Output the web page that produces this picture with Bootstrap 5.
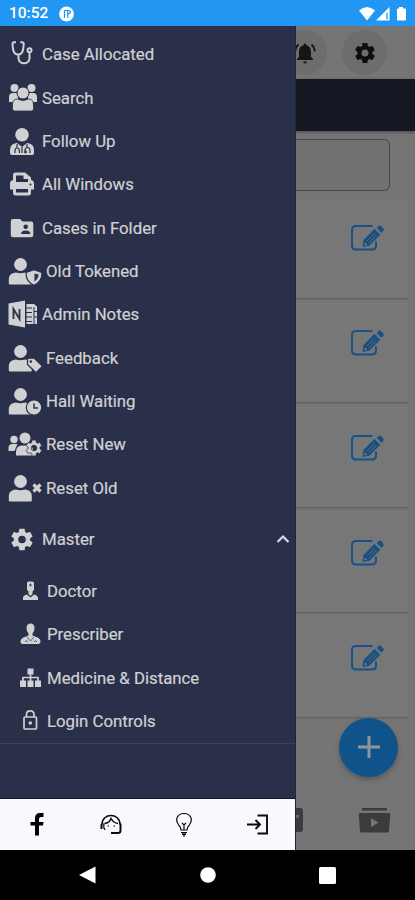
<!DOCTYPE html>
<html lang="en">
<head>
<meta charset="utf-8">
<meta name="viewport" content="width=device-width, initial-scale=1">
<title>Case Management</title>
<link href="https://cdn.jsdelivr.net/npm/bootstrap@5.3.0/dist/css/bootstrap.min.css" rel="stylesheet">
<style>
  body { font-family: Roboto, "Liberation Sans", sans-serif; background: #000; }
  svg { display: block; flex: none; }
  .phone { width: 415px; height: 900px; }
  .statusbar { height: 26px; background: #2196f3; font-size: 15.5px; font-weight: 500; padding: 2px 8px 0 9px; gap: 11px; }
  .drawer { width: 296px; background: #2a3049; color: #d0d1d4; border-right: 1px solid #20253b; }
  .menu { padding-top: 6.5px; }
  .entry, .sub { height: 43.35px; font-size: 16.8px; line-height: 20px; white-space: nowrap; -webkit-text-stroke: .2px #d0d1d4; }
  .entry { padding-left: 7px; }
  .entry.wide svg { margin-right: 4px; }
  .entry svg, .sub svg { fill: #d0d1d3; color: #d0d1d3; -webkit-text-stroke: 0; }
  .entry.master { height: 60px; }
  .entry.master .chev { margin-right: 4px; fill: none; }
  .sub { padding-left: 19px; }
  .subs { border-bottom: 1px solid #3a435a; height: 174.5px; }
  .quick { height: 52px; background: #f8f9fd; border-top: 1px solid #14172a; color: #0b0b0d; }
  .page { min-width: 0; background: #757575; color: #111; }
  .tools { height: 53px; padding-right: 28px; gap: 15px; }
  .round { width: 45px; height: 45px; background: #6d6d6d; }
  .band { height: 52px; background: #151723; box-shadow: 0 1px 3px #444; }
  .find { height: 52px; width: 94px; margin-top: 8px; border: 1px solid #464646; border-left: 0; border-radius: 0 6px 6px 0; background: #727272; }
  .cases { margin: 7px 7px 0 0; background: #777; }
  .case { height: 104.75px; border-bottom: 1px solid #626262; padding-right: 24px; padding-bottom: 14px; box-shadow: 0 1px 1px #6e6e6e; }
  .case:first-child { height: 100.5px; padding-bottom: 19px; }
  .fab { width: 59px; height: 59px; background: #10528a; margin-right: 17px; box-shadow: 0 3px 5px #5a5a5a; }
  .tabs { height: 60px; padding-right: 24px; }
  .sysnav { height: 50px; background: #000; padding: 0 79px; }
</style>
<script src="https://cdn.jsdelivr.net/npm/bootstrap@5.3.0/dist/js/bootstrap.bundle.min.js"></script>
</head>
<body class="m-0 overflow-hidden">
<svg width="0" height="0" class="position-absolute">
  <defs>
    <symbol id="person" viewBox="0 0 35 30"><circle cx="13.500" cy="8.500" r="6.400"/><path d="M1.800 27.500v-4q0-6.500 7-7 4.500 1.300 9.500 0 6.500.5 6.500 7v4q0 1-1 1h-21q-1 0-1-1z"/></symbol>
    <symbol id="gear" viewBox="0 0 24 24"><path d="M19.430 12.980c.04-.32.07-.64.07-.98s-.03-.66-.07-.98l2.110-1.650c.19-.15.24-.42.12-.64l-2-3.460c-.12-.22-.39-.3-.61-.22l-2.490 1c-.52-.4-1.080-.73-1.690-.98l-.38-2.650A.49.49 0 0 0 14 2h-4c-.25 0-.46.18-.49.42l-.38 2.650c-.61.25-1.170.59-1.690.98l-2.490-1c-.23-.09-.49 0-.61.22l-2 3.460c-.13.22-.07.49.12.64l2.110 1.650c-.04.32-.07.65-.07.98s.03.66.07.98l-2.110 1.650c-.19.15-.24.42-.12.64l2 3.460c.12.22.39.3.61.22l2.490-1c.52.4 1.080.73 1.690.98l.38 2.650c.03.24.24.42.49.42h4c.25 0 .46-.18.49-.42l.38-2.650c.61-.25 1.170-.59 1.690-.98l2.490 1c.23.09.49 0 .61-.22l2-3.460c.12-.22.07-.49-.12-.64zM12 15.500a3.500 3.500 0 1 1 0-7 3.500 3.500 0 0 1 0 7z"/></symbol>
    <symbol id="edit" viewBox="0 0 34 28"><path d="M22.500 2H6Q2 2 2 6v15.500q0 4 4 4h16q4 0 4-4v-4" fill="none" stroke="#16518a" stroke-width="2"/><path d="M14 16.500 24.500 6l4.800 4.800L19 21l-5.500 1z" fill="#1d4a73" stroke="#14568f" stroke-width="1.600"/><path d="m17 17 8-8m-6.500 10 8-8" stroke="#5d6f80" stroke-width="1"/><path d="m26.700 4 2-2q1.200-.9 2.300 0l2.300 2.500q.9 1.200 0 2.200l-1.800 2z" fill="#174f83"/><path d="m14.800 18.200 2.600 2.400-3 .6z" fill="#747b82"/></symbol>
  </defs>
</svg>
<div class="phone d-flex flex-column">
  <header class="statusbar d-flex align-items-center text-white">
    <span>10:52</span>
    <svg width="15" height="16" viewBox="0 0 15 16"><circle cx="7.500" cy="8" r="7.400" fill="#fff"/><path d="M5.500 4v8M8.700 4v8M5 4.500h4.500q2.200.3 2 1.900-.3 1.400-2.300 1.400" stroke="#2196f3" stroke-width="1.200" fill="none"/></svg>
    <svg class="ms-auto" width="48" height="16" viewBox="0 0 48 16" fill="#fff"><path d="M0 4.500Q8-2.500 16 4.500L8 14.500z"/><path d="M30.500 1v13.500H17z"/><path d="M28 6.500v7" stroke="#2196f3" stroke-width="1.300"/><path d="M40 1h4v1.500h2q1 0 1 1v10q0 1-1 1h-7q-1 0-1-1v-10q0-1 1-1h1z"/></svg>
  </header>

  <div class="d-flex flex-grow-1">
    <aside class="drawer d-flex flex-column flex-shrink-0">
      <nav class="menu flex-grow-1">
        <div class="entry d-flex align-items-center"><svg width="35" height="30"><g fill="none" stroke="currentColor" stroke-width="2"><path d="M9 3.300H7Q5.300 3.300 5.500 5.500l.6 5q.9 5 5 5t5-5l.6-5q.2-2.200-1.500-2.200h-2M11.500 15.500V19c0 7 11 7 11 0v-5.500"/><circle cx="22.500" cy="11.300" r="2"/></g></svg><span>Case Allocated</span></div>
        <div class="entry d-flex align-items-center"><svg width="35" height="30"><circle cx="7.500" cy="5" r="4"/><circle cx="24.500" cy="5" r="4"/><path d="M2 19v-5q0-4 4-4h5v9zM30 19v-5q0-4-4-4h-5v9z"/><circle cx="16" cy="10" r="6" stroke="#2a3049"/><path d="M5.500 26v-4q0-6 5-6 5.500 3 11 0 5 0 5 6v4q0 2-2 2h-17q-2 0-2-2z" stroke="#2a3049" stroke-width=".8"/></svg><span>Search</span></div>
        <div class="entry d-flex align-items-center"><svg width="35" height="30"><circle cx="15" cy="8.800" r="6.800"/><path d="M3 27v-3q0-6.500 7-7l5 4 5-4q7 .5 7 7v3q0 2-2 2H5q-2 0-2-2z"/><g fill="none" stroke="#2a3049" stroke-width="1.200"><path d="M10 18v4M20 18v3M8 27v-2q0-3 2.200-3t2.200 3v2M15 21v6M18 25q0-3.500 2.500-3.500T23 25v2"/><circle cx="18.500" cy="26" r=".8"/></g></svg><span>Follow Up</span></div>
        <div class="entry d-flex align-items-center"><svg width="35" height="30"><path fill-rule="evenodd" d="M6 11V6q0-2.500 2.500-2.500h9.500l6 5v2.500q3 .5 3 3.500v6h-3v3q0 3-2.500 3h-13q-2.500 0-2.500-3v-3H3v-6q0-3 3-3.500zm3-4.500v6.500h12V10h-4.500V6.500zM9 20v3.500h12V20z"/><circle cx="23.500" cy="15.500" r="1" fill="#2a3049"/></svg><span>All Windows</span></div>
        <div class="entry d-flex align-items-center"><svg width="35" height="30"><path d="M6 6h7l2.500 2.500H24q2.300 0 2.300 2.300V22q0 2.300-2.300 2.300H6q-2.200 0-2.200-2.300V8.200Q3.800 6 6 6z"/><g fill="#2a3049"><circle cx="18.700" cy="13.700" r="2.300"/><path d="M14 21q0-3.500 4.700-3.500t4.700 3.500z"/></g></svg><span>Cases in Folder</span></div>
        <div class="entry wide d-flex align-items-center"><svg width="35" height="30"><use href="#person"/><path d="m27 13.800 7.800 2.700q1 8.500-7.800 12.800-8.800-4.300-7.800-12.800z" stroke="#2a3049" stroke-width="1.200"/><path d="M27.500 17.500v8q4-3 4-7z" fill="#2a3049"/></svg><span>Old Tokened</span></div>
        <div class="entry d-flex align-items-center"><svg width="35" height="30"><path d="M1.500 4.500 18 1.500v27l-16.500-3z"/><path d="M19.500 5H27l3 2.500V25H19.500z"/><path d="M19 9h6m-6 4.500h6M19 18h6m-6 4.500h6M27 8v17m0-12.500h3M27 18h3" stroke="#2a3049" stroke-width="1"/><path d="M6.500 20V10l6 10V10" fill="none" stroke="#2a3049" stroke-width="1.800"/></svg><span>Admin Notes</span></div>
        <div class="entry wide d-flex align-items-center"><svg width="35" height="30"><use href="#person"/><path d="M20.500 16.500q0-1.300 1.300-1.300h5.500l7.200 7q1 1 0 2l-4.500 4.500q-1 .9-2 0l-7.500-7.300z" stroke="#2a3049" stroke-width="1.200"/><circle cx="23.800" cy="18.600" r="1.300" fill="#2a3049"/></svg><span>Feedback</span></div>
        <div class="entry wide d-flex align-items-center"><svg width="35" height="30"><use href="#person"/><circle cx="27" cy="21.500" r="7.700" stroke="#2a3049" stroke-width="1.200"/><path d="M27 17.500v4.500h4" fill="none" stroke="#2a3049" stroke-width="1.500"/></svg><span>Hall Waiting</span></div>
        <div class="entry wide d-flex align-items-center"><svg width="35" height="30"><circle cx="7" cy="10.500" r="3.700"/><circle cx="18" cy="9" r="5.500"/><path d="M1.500 22v-3q0-4 4-4h5l-3 7zM9 26v-3q0-6.500 6-6.500h6q5 0 5 5v5H10q-1 0-1-.5z"/><use href="#gear" x="17.500" y="9.500" width="19" height="19" stroke="#2a3049" stroke-width="1"/></svg><span>Reset New</span></div>
        <div class="entry wide d-flex align-items-center"><svg width="35" height="30"><use href="#person"/><path d="m26.500 11.500 7 7m0-7-7 7" stroke="currentColor" stroke-width="3.200"/></svg><span>Reset Old</span></div>
        <div class="entry master d-flex align-items-center"><svg width="35" height="30"><use href="#gear" x="2" y="2.500" width="26" height="26"/></svg><span>Master</span><svg class="chev ms-auto" width="16" height="12"><path d="m2.500 9 5.500-5.500L13.500 9" stroke="#d8d9dc" stroke-width="2.200"/></svg></div>
        <div class="subs">
          <div class="sub d-flex align-items-center"><svg width="28" height="26"><path d="M8 5q0-1.500 1.500-1.500h4Q15 3.500 15 5v7q-3.500 4-7 0zM4 22v-2q0-2.500 4-3.500l3.500 3 3.500-3q4 1 4 3.500v2z"/><path d="M9.500 13v3l2 2 2-2v-3z"/><path d="M10 7h3m-1.500-1.500v3" stroke="#2a3049" stroke-width=".8"/></svg><span>Doctor</span></div>
          <div class="sub d-flex align-items-center"><svg width="28" height="26"><path d="M11.500 2.500q4 0 4 4.500 0 3.500-2 5.500v2l5 2q3 1 3 4.500 0 2-2 2h-16q-2 0-2-2 0-3.500 3-4.500l5-2v-2q-2-2-2-5.500 0-4.500 4-4.500z"/><path d="m8 16 3.500 4 3.500-4M6 21q1-3 3 0m6 0q1-3 3 0" fill="none" stroke="#2a3049" stroke-width=".7"/></svg><span>Prescriber</span></div>
          <div class="sub d-flex align-items-center"><svg width="28" height="26"><path d="M8.500 3.500h6v6h-6zM1 15.500h6v6.500H1zM8.500 15.500h6v6.500h-6zM16 15.500h6v6.500h-6z"/><path d="M4 16v-3.500h15V16M11.500 9v7" fill="none" stroke="currentColor" stroke-width="1.700"/></svg><span>Medicine &amp; Distance</span></div>
          <div class="sub d-flex align-items-center"><svg width="28" height="26"><g fill="none" stroke="currentColor" stroke-width="1.700"><rect x="5" y="9" width="12.500" height="12" rx="1"/><path d="M7.500 9V6.500q0-3.700 3.700-3.700T15 6.500V9"/></g><circle cx="11.300" cy="15" r="1.800"/></svg><span>Login Controls</span></div>
        </div>
      </nav>
      <div class="quick d-flex align-items-center">
        <div class="col-3 d-flex justify-content-center"><svg width="28" height="28"><path d="M12 24.500V14.500H7.500V11H12V7.500Q12 2 17 2h3.500v4H18q-2 0-2 2v3h4.500l-.5 3.500h-4v10z"/></svg></div>
        <div class="col-3 d-flex justify-content-center"><svg width="28" height="28" fill="none" stroke="currentColor"><path d="M5 13.500C5 1.500 23 1.500 23 13.500" stroke-width="1.600"/><path d="M7.500 12.500q5-.5 6.500-5 2.500 4.500 7 5" stroke-width="1.500"/><path d="M4.500 13v5M23.500 12.500v7q0 2.500-2.500 2.500h-7" stroke-width="2"/><path d="M7 12.500q-1 4 1 6.500M10.500 15h1.500m4.500 0H18" stroke-width="1.200"/></svg></div>
        <div class="col-3 d-flex justify-content-center"><svg width="28" height="28" fill="none" stroke="currentColor" stroke-width="1.200"><path d="M11 19q0-3-2-4.500C4 8 8 2.500 14 2.500s10 5.500 5 12q-2 1.500-2 4.500zM11 21.500h6m-4 3.500h2M14 19v-6m-2-1 2 2 2-2"/><path d="M12 23.200h4" stroke-width="1.800"/></svg></div>
        <div class="col-3 d-flex justify-content-center"><svg width="28" height="28" fill="none" stroke="currentColor" stroke-width="1.900"><path d="M13.500 4.500h9.500v18h-9.500M3 13.500h13M11.500 9l4.500 4.500-4.500 4.500"/></svg></div>
      </div>
    </aside>

    <main class="page flex-grow-1 d-flex flex-column overflow-hidden">
      <div class="tools d-flex align-items-center justify-content-end">
        <div class="round rounded-circle d-flex align-items-center justify-content-center flex-shrink-0"><svg width="24" height="24" viewBox="0 0 24 24" fill="#151515"><path d="M12 2.500q1.500 0 1.500 1.700C17 5 18 8 18 11v5l2 2v1H4v-1l2-2v-5c0-3 1-6 4.500-6.800 0-1.700 1.500-1.700 1.500-1.700zM10 20.500h4q-.5 2-2 2t-2-2z"/><path d="M5.500 3.500Q2.500 6 2.200 10.500M18.500 3.500q3 2.500 3.300 7" fill="none" stroke="#151515" stroke-width="1.800"/></svg></div>
        <div class="round rounded-circle d-flex align-items-center justify-content-center flex-shrink-0"><svg width="24" height="24" fill="#0e0e0e"><use href="#gear" width="24" height="24"/></svg></div>
      </div>
      <div class="band flex-shrink-0"></div>
      <div class="find flex-shrink-0"></div>
      <div class="cases">
        <div class="case d-flex align-items-center justify-content-end"><svg width="34" height="28"><use href="#edit"/></svg></div>
        <div class="case d-flex align-items-center justify-content-end"><svg width="34" height="28"><use href="#edit"/></svg></div>
        <div class="case d-flex align-items-center justify-content-end"><svg width="34" height="28"><use href="#edit"/></svg></div>
        <div class="case d-flex align-items-center justify-content-end"><svg width="34" height="28"><use href="#edit"/></svg></div>
        <div class="case d-flex align-items-center justify-content-end"><svg width="34" height="28"><use href="#edit"/></svg></div>
      </div>
      <div class="fab rounded-circle align-self-end flex-shrink-0 d-flex align-items-center justify-content-center"><svg width="24" height="24"><path d="M12 1v22M1 12h22" stroke="#8d969e" stroke-width="3"/></svg></div>
      <div class="tabs mt-auto d-flex align-items-center justify-content-between">
        <svg width="7" height="26" fill="#3b3b3b"><path d="M0 1h4q3 0 3 3v18q0 3-3 3H0z"/><path d="M0 8h3v3H0z" fill="#666"/></svg>
        <svg width="33" height="27" fill="#3b3b3b"><path d="M4 1h25v2.500H4zM2 6h29q1.500 0 1.300 1.500L31 24q0 1.500-1.500 1.500h-26Q2 25.500 2 24L.8 7.500Q.6 6 2 6z"/><path d="m13 11 7.500 4.500L13 20z" fill="#757575"/></svg>
      </div>
    </main>
  </div>

  <footer class="sysnav d-flex align-items-center justify-content-between">
    <svg width="17" height="18"><path d="M16.500.5v17L0 9z" fill="#fff"/></svg>
    <svg width="16" height="16"><circle cx="8" cy="8" r="7.800" fill="#fff"/></svg>
    <svg width="17" height="17"><rect width="17" height="17" rx="1.500" fill="#fff"/></svg>
  </footer>
</div>
</body>
</html>
